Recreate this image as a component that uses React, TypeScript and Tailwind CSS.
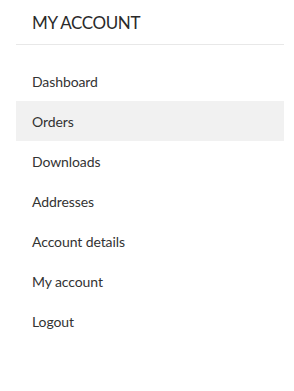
const links = ["Dashboard", "Orders", "Downloads", "Addresses", "Account details", "My account", "Logout"]

export default function App() {
  return (
    <div className="min-h-screen bg-white font-['Lato','Open_Sans',sans-serif] text-[#333]">
      <div className="ml-4 mr-[10px] pt-[11px]">
        {/* Title */}
        <h2 className="border-b border-[#e8e8e8] pb-[9px] pl-4 text-[17px] leading-6 tracking-[-0.4px] text-[#2a2a2a]">
          MY ACCOUNT
        </h2>

        {/* Nav */}
        <ul className="mt-4">
          {links.map((label) => (
            <li
              key={label}
              className={`flex h-10 items-center pl-4 text-[14px] tracking-[-0.1px] ${label === "Orders" ? "bg-[#f1f1f1]" : ""}`}
            >
              {label}
            </li>
          ))}
        </ul>
      </div>
    </div>
  )
}
